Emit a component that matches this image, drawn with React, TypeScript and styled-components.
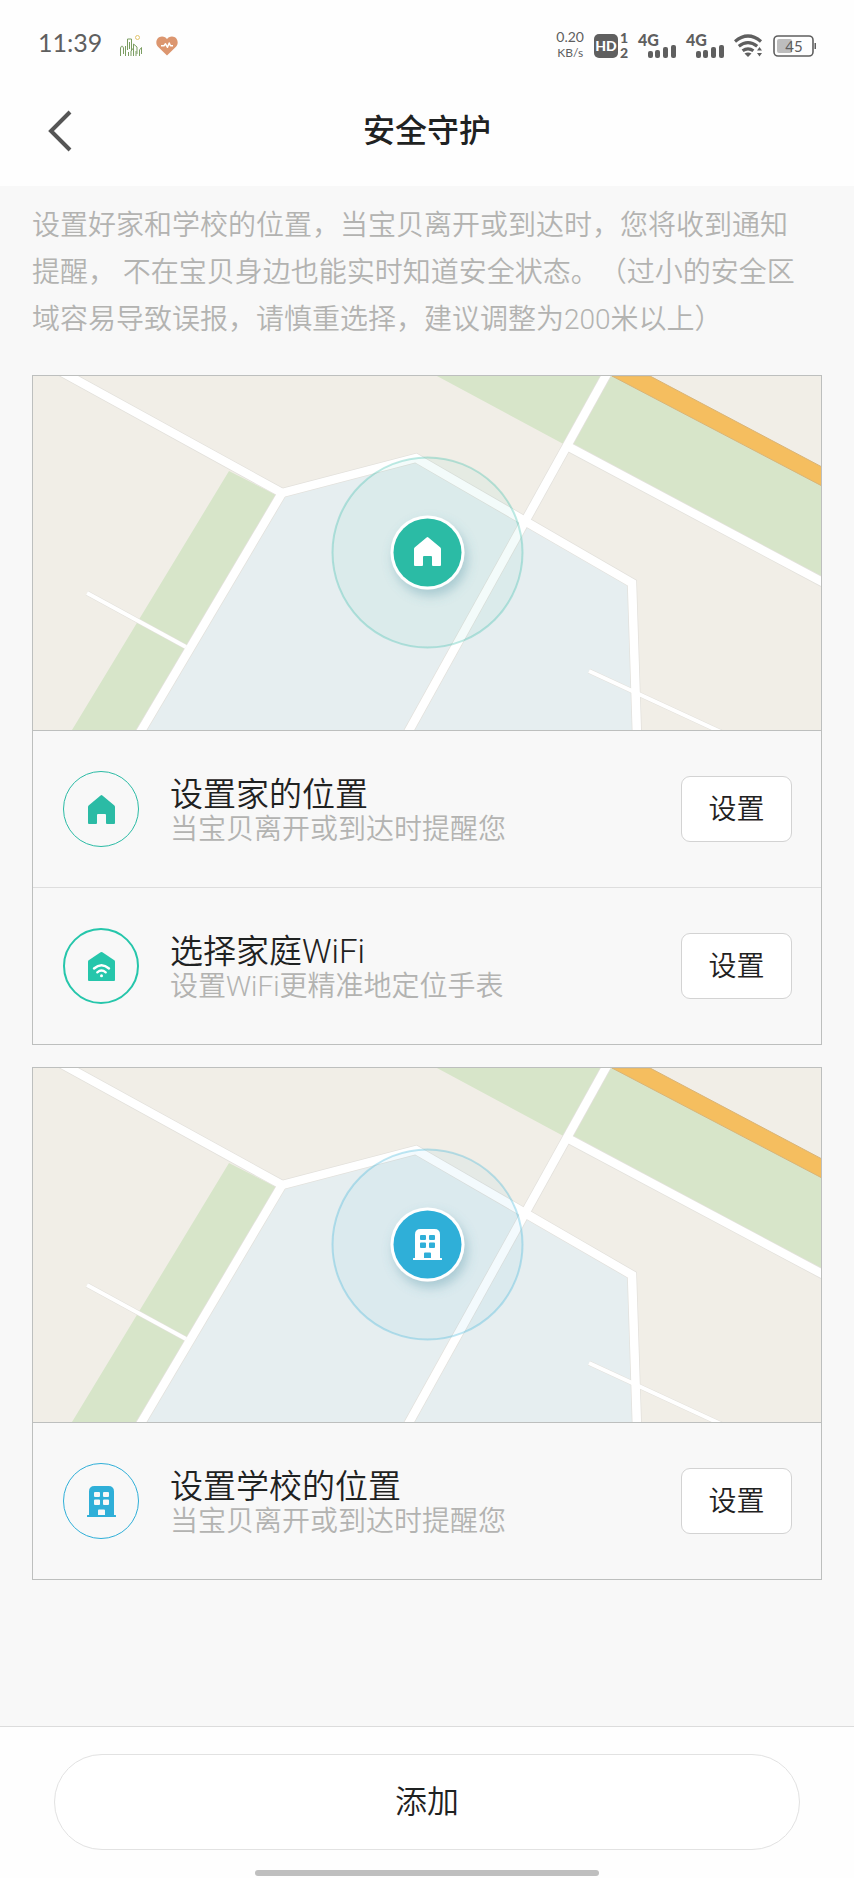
import React from 'react';
import styled, { createGlobalStyle } from 'styled-components';

const TEAL = '#2bbba5';
const MINT = '#26c6ab';
const BLUE = '#2fafd8';
const INK = '#5f5f5f';

const GlobalStyle = createGlobalStyle`
  *, *::before, *::after { box-sizing: border-box; }
  body {
    margin: 0;
    background: #f8f8f8;
    color: #1f2222;
    font-family: Roboto, "Noto Sans CJK SC", sans-serif;
    font-weight: 350;
    text-spacing-trim: space-all;
  }
  button { font: inherit; color: inherit; cursor: pointer; }
  svg { display: block; }
`;

const Page = styled.div`
  min-height: 100vh;
  display: flex;
  flex-direction: column;
`;

const Top = styled.header`
  background: #fefefe;
`;

const StatusBar = styled.div`
  height: 76px;
  padding: 16px 38px 0;
  display: flex;
  align-items: center;
  justify-content: space-between;
  color: ${INK};
`;

const StatusGroup = styled.div<{ $gap: number }>`
  display: flex;
  align-items: center;
  gap: ${(p) => p.$gap}px;
`;

const Clock = styled.time`
  font-family: Lato, sans-serif;
  font-weight: 400;
  font-size: 25px;
  line-height: 32px;
  padding: 0 4px 8px 0;
`;

const Speed = styled.div`
  display: flex;
  flex-direction: column;
  align-items: center;
  font-family: Lato, sans-serif;
  font-weight: 400;
  font-size: 14px;
  line-height: 17px;
  padding-bottom: 4px;

  small { font-size: 12px; line-height: 16px; }
`;

const StatusSvg = styled.svg`
  overflow: visible;
  font-family: Lato, sans-serif;
  font-weight: 900;
  fill: ${INK};
`;

const NavBar = styled.nav`
  height: 110px;
  padding: 0 36px;
  display: grid;
  grid-template-columns: 48px 1fr 48px;
  align-items: center;
`;

const BackButton = styled.button`
  height: 48px;
  padding: 0;
  border: 0;
  background: none;
  display: flex;
  align-items: center;
  justify-content: center;
  width: 48px;
`;

const Title = styled.h1`
  margin: 0;
  font-size: 32px;
  line-height: 48px;
  font-weight: 500;
  text-align: center;
`;

const Main = styled.main`
  flex: 1;
  padding: 16px 32px 48px;
`;

const Intro = styled.p`
  margin: 0 20px 32px 0;
  font-size: 28px;
  line-height: 47px;
  color: #b3b3b1;
`;

const Card = styled.section`
  border: 1px solid #bdbfbe;
  margin-bottom: 22px;
`;

const MapSvg = styled.svg`
  width: 100%;
  height: auto;
`;

const Row = styled.div<{ $soft?: boolean }>`
  min-height: 157px;
  padding: 0 29px 0 30px;
  border-top: 1px solid ${(p) => (p.$soft ? '#dedede' : '#bdbfbe')};
  display: flex;
  align-items: center;
`;

const Badge = styled.div<{ $color: string; $line: number }>`
  flex: none;
  width: 76px;
  height: 76px;
  border: ${(p) => p.$line}px solid ${(p) => p.$color};
  border-radius: 50%;
  color: ${(p) => p.$color};
  display: flex;
  align-items: center;
  justify-content: center;
`;

const RowText = styled.div`
  flex: 1;
  padding: 5px 16px 0 31px;
`;

const RowTitle = styled.h2`
  margin: 0;
  font-size: 33px;
  line-height: 36px;
  font-weight: 350;
`;

const RowHint = styled.p`
  margin: 0;
  font-size: 28px;
  line-height: 34px;
  color: #b3b3b1;
`;

const SetButton = styled.button`
  flex: none;
  width: 111px;
  height: 66px;
  padding: 0 0 4px;
  border: 1px solid #d3d3d3;
  border-radius: 9px;
  background: #fff;
  font-size: 28px;
`;

const Footer = styled.footer`
  padding: 27px 54px 2px;
  border-top: 1px solid #dcdcdc;
  background: #fefefe;
  display: flex;
  flex-direction: column;
  align-items: center;
  gap: 20px;
`;

const AddButton = styled.button`
  width: 100%;
  height: 96px;
  padding: 0 0 6px;
  border: 1px solid #e2e2e2;
  border-radius: 48px;
  background: #fff;
  font-size: 32px;
`;

const HomeBar = styled.div`
  width: 46%;
  height: 6px;
  border-radius: 3px;
  background: #bfbfbf;
`;

const House = () => (
  <path d="M12.6 .5Q13.5-.3 14.4 .5L26.4 10.6Q27 11.2 27 12V28Q27 29 26 29H19Q18 29 18 28V20Q18 19 17 19H10Q9 19 9 20V28Q9 29 8 29H1Q0 29 0 28V12Q0 11.2 .6 10.6Z" />
);

const School = () => (
  <path
    fillRule="evenodd"
    d="M7.500 0H21.500Q27 0 27 5.500V29H28.500Q29 29 29 29.500V30.500Q29 31 28.500 31H.5Q0 31 0 30.500V29.500Q0 29 .5 29H2V5.500Q2 0 7.500 0ZM8 6Q7 6 7 7V10Q7 11 8 11H12Q13 11 13 10V7Q13 6 12 6ZM17 6Q16 6 16 7V10Q16 11 17 11H21Q22 11 22 10V7Q22 6 21 6ZM8 13.500Q7 13.500 7 14.500V18Q7 19 8 19H12Q13 19 13 18V14.500Q13 13.500 12 13.500ZM17 13.500Q16 13.500 16 14.500V18Q16 19 17 19H21Q22 19 22 18V14.500Q22 13.500 21 13.500ZM12 23.500Q11 23.500 11 24.500V29H18V24.500Q18 23.500 17 23.500Z"
  />
);

const HomeIcon = () => (
  <svg width="27" height="29" viewBox="0 0 27 29" fill="currentColor" aria-hidden="true">
    <House />
  </svg>
);

const WifiHomeIcon = () => (
  <svg width="27" height="29" viewBox="0 0 27 29" fill="currentColor" aria-hidden="true">
    <path d="M12.600 .3Q13.500-.2 14.400 .3L26.300 8.200Q27 8.700 27 9.500V28Q27 29 26 29H1Q0 29 0 28V9.500Q0 8.700 .7 8.200Z" />
    <path d="M6 16.500Q13.500 10 21 16.500M9.300 20.300Q13.500 16.800 17.700 20.300" fill="none" stroke="#fff" strokeWidth="2.400" strokeLinecap="round" />
    <circle cx="13.500" cy="23.800" r="1.500" fill="#fff" />
  </svg>
);

const SchoolIcon = () => (
  <svg width="29" height="31" viewBox="0 0 29 31" fill="currentColor" aria-hidden="true">
    <School />
  </svg>
);

type Place = 'home' | 'school';

const ROADS = [
  'M28 -4.500L249 117L383 82L599 207L604 360',
  'M249 117L105 360',
  'M576 -6L373 360',
  'M536 71L795 209',
];
const LANES = ['M54 217L153 271', 'M556 295L690 357'];

const AreaMap = ({ place }: { place: Place }) => {
  const color = place === 'home' ? TEAL : BLUE;
  const shadow = `pin-shadow-${place}`;
  return (
    <MapSvg viewBox="0 0 788 354" role="img" aria-label={place === 'home' ? '家的安全区域' : '学校的安全区域'}>
      <defs>
        <filter id={shadow} x="-40%" y="-40%" width="200%" height="200%">
          <feDropShadow dx="3" dy="6" stdDeviation="6" floodColor="#4a8ba0" floodOpacity="0.36" />
        </filter>
      </defs>
      <rect width="788" height="354" fill="#f1eee7" />
      <path d="M249 117L383 82L599 207L604 354H108Z" fill="#e6eef0" />
      <path d="M196 95L245 120L103 354H39ZM404 0H590L789 105V206L536 71Z" fill="#d7e5c9" />
      <path d="M579 0H617L789 91V110Z" fill="#f5be5f" stroke="#d9b477" strokeWidth="1" />
      <g fill="none" strokeLinejoin="miter">
        {ROADS.map((d) => (
          <path key={d} d={d} stroke="#e3e1dc" strokeWidth="10" />
        ))}
        {LANES.map((d) => (
          <path key={d} d={d} stroke="#e3e1dc" strokeWidth="5" />
        ))}
        {ROADS.map((d) => (
          <path key={`${d}-top`} d={d} stroke="#fff" strokeWidth="8.500" />
        ))}
        {LANES.map((d) => (
          <path key={`${d}-top`} d={d} stroke="#fff" strokeWidth="4" />
        ))}
      </g>
      <circle cx="394.500" cy="176.500" r="95" fill={color} fillOpacity="0.060" stroke={color} strokeOpacity="0.300" strokeWidth="2" />
      <circle cx="394.500" cy="176.500" r="37" fill="#fff" filter={`url(#${shadow})`} />
      <circle cx="394.500" cy="176.500" r="34" fill={color} />
      <g fill="#fff" transform={place === 'home' ? 'translate(381 161)' : 'translate(380 161)'}>
        {place === 'home' ? <House /> : <School />}
      </g>
    </MapSvg>
  );
};

const Signal = () => (
  <StatusSvg width="38" height="38" viewBox="0 -6 38 38" aria-label="4G">
    <text x="0" y="13" fontSize="16">4G</text>
    <rect x="10" y="18" width="5" height="7" rx="2" />
    <rect x="17" y="17" width="5" height="8" rx="2" />
    <rect x="25" y="14" width="5" height="11" rx="2" />
    <rect x="33" y="12" width="5" height="13" rx="2" />
  </StatusSvg>
);

type Item = { icon: React.ReactNode; color: string; line: number; title: string; hint: string };

const homeItems: Item[] = [
  { icon: <HomeIcon />, color: TEAL, line: 1, title: '设置家的位置', hint: '当宝贝离开或到达时提醒您' },
  { icon: <WifiHomeIcon />, color: MINT, line: 2, title: '选择家庭WiFi', hint: '设置WiFi更精准地定位手表' },
];
const schoolItems: Item[] = [
  { icon: <SchoolIcon />, color: BLUE, line: 1, title: '设置学校的位置', hint: '当宝贝离开或到达时提醒您' },
];

const PlaceCard = ({ place, items }: { place: Place; items: Item[] }) => (
  <Card>
    <AreaMap place={place} />
    {items.map((item, i) => (
      <Row key={item.title} $soft={i > 0}>
        <Badge $color={item.color} $line={item.line}>{item.icon}</Badge>
        <RowText>
          <RowTitle>{item.title}</RowTitle>
          <RowHint>{item.hint}</RowHint>
        </RowText>
        <SetButton type="button" aria-label={item.title}>设置</SetButton>
      </Row>
    ))}
  </Card>
);

export default function App() {
  return (
    <>
      <GlobalStyle />
      <Page>
        <Top>
          <StatusBar>
            <StatusGroup $gap={13}>
              <Clock>11:39</Clock>
              <svg width="24" height="24" viewBox="0 0 24 24" fill="none" stroke="#7b9d62" strokeWidth="1" aria-hidden="true">
                <path d="M1.500 22V14Q3 10 4.500 14V20M6.500 21V12M8.500 12V5H12.500V17M8.500 12V16M10.500 8V15M14.500 22V10L18 13V20M14.500 14L12 17V22M20.500 22V16L22.500 13.500V20M6.500 17V22M9.500 18V22M17 17V22" />
                <circle cx="18.500" cy="3.500" r="2" stroke="#e2c46d" />
              </svg>
              <svg width="22" height="20" viewBox="0 0 22 20" aria-hidden="true">
                <path d="M11 19.500L2 10.800C-1.500 7 .8 .5 6 .5C8.300 .5 10 1.600 11 3.200C12 1.600 13.700 .5 16 .5C21.200 .5 23.500 7 20 10.800Z" fill="#dc966f" />
                <path d="M5 9.800H8L9.500 7.800L11.500 11.300L13.200 7L14.500 9.800H17" fill="none" stroke="#fff" strokeWidth="1.500" strokeLinejoin="round" />
              </svg>
            </StatusGroup>
            <StatusGroup $gap={10}>
              <Speed>
                0.20
                <small>KB/s</small>
              </Speed>
              <StatusSvg width="34" height="38" viewBox="0 -6 34 38" aria-label="HD">
                <rect x="0" y="1" width="24" height="24" rx="5" />
                <text x="12" y="18" fontSize="14" textAnchor="middle" fill="#fff">HD</text>
                <text x="30" y="10" fontSize="14" textAnchor="middle">1</text>
                <text x="30" y="25" fontSize="14" textAnchor="middle">2</text>
              </StatusSvg>
              <Signal />
              <Signal />
              <svg width="29" height="24" viewBox="0 0 29 24" fill="none" stroke={INK} strokeWidth="3.200" aria-label="WiFi">
                <path d="M1 7.500Q14 -3.500 27 7.500M4.800 12.300Q14 5 23.200 12.300M8.600 16.800Q14 12.800 19.400 16.800" />
                <path d="M10.500 19.500Q14 17.500 17.500 19.500L14 23Z" fill={INK} stroke="none" />
                <path d="M23 16.500L25.500 13L28 16.500ZM23 19L25.500 22.500L28 19Z" fill={INK} stroke="none" />
              </svg>
              <StatusSvg width="43" height="24" viewBox="0 0 43 24" aria-label="45%">
                <rect x="1" y="2" width="39" height="20" rx="4" fill="none" stroke={INK} strokeWidth="1.600" />
                <rect x="4" y="5" width="15" height="14" rx="2" fill="#bdbdbd" />
                <rect x="41.500" y="9" width="1.500" height="6" />
                <text x="21" y="17.500" fontSize="15" fontWeight="400" textAnchor="middle">45</text>
              </StatusSvg>
            </StatusGroup>
          </StatusBar>
          <NavBar>
            <BackButton type="button" aria-label="返回">
              <svg width="24" height="42" viewBox="0 0 24 42" fill="none" stroke="#555" strokeWidth="4" aria-hidden="true">
                <path d="M22 2L3 21L22 40" />
              </svg>
            </BackButton>
            <Title>安全守护</Title>
          </NavBar>
        </Top>
        <Main>
          <Intro>
            设置好家和学校的位置，当宝贝离开或到达时，您将收到通知提醒， 不在宝贝身边也能实时知道安全状态。（过小的安全区域容易导致误报，请慎重选择，建议调整为200米以上）
          </Intro>
          <PlaceCard place="home" items={homeItems} />
          <PlaceCard place="school" items={schoolItems} />
        </Main>
        <Footer>
          <AddButton type="button">添加</AddButton>
          <HomeBar />
        </Footer>
      </Page>
    </>
  );
}
